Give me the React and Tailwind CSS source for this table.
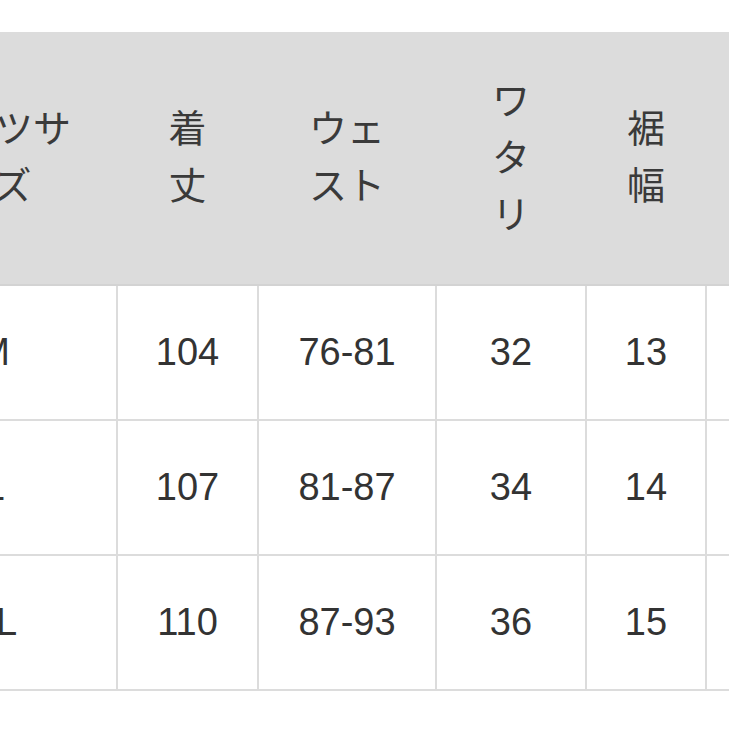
import React from "react";

const columns = [
  { label: ["パンツサ", "イズ"], width: "w-[246px]" },
  { label: ["着", "丈"], width: "w-[141px]" },
  { label: ["ウェ", "スト"], width: "w-[178px]" },
  { label: ["ワ", "タ", "リ"], width: "w-[150px]" },
  { label: ["裾", "幅"], width: "w-[120px]" },
  { label: ["股", "下"], width: "w-[160px]" },
];

const rows = [
  ["M", "104", "76-81", "32", "13", "74"],
  ["L", "107", "81-87", "34", "14", "76"],
  ["XL", "110", "87-93", "36", "15", "78"],
];

const SizeTable = () => (
  <table className="ml-[-130px] w-[995px] min-w-[995px] table-fixed border-collapse text-[#333]">
    <colgroup>
      {columns.map((c, i) => (
        <col key={i} className={c.width} />
      ))}
    </colgroup>
    <thead>
      <tr>
        {columns.map((c, i) => (
          <th
            key={i}
            className="h-[252px] border-2 border-[#dcdcdc] border-b-[#d3d3d3] bg-[#dcdcdc] p-0 pb-[10px] text-center align-middle text-[38px] font-normal leading-[57px] text-[#3a3a3a] [font-family:'Noto_Sans_CJK_JP',sans-serif]"
          >
            {c.label.map((line, j) => (
              <div key={j}>{line}</div>
            ))}
          </th>
        ))}
      </tr>
    </thead>
    <tbody>
      {rows.map((row, i) => (
        <tr key={i}>
          {row.map((cell, j) => (
            <td
              key={j}
              className="h-[135px] border-2 border-[#dcdcdc] bg-white p-0 text-center align-middle text-[38px] [font-family:'Liberation_Sans',Arial,sans-serif]"
            >
              {cell}
            </td>
          ))}
        </tr>
      ))}
    </tbody>
  </table>
);

export default function App() {
  return (
    <div className="h-[729px] w-[729px] overflow-hidden bg-white pt-[32px]">
      <SizeTable />
    </div>
  );
}
